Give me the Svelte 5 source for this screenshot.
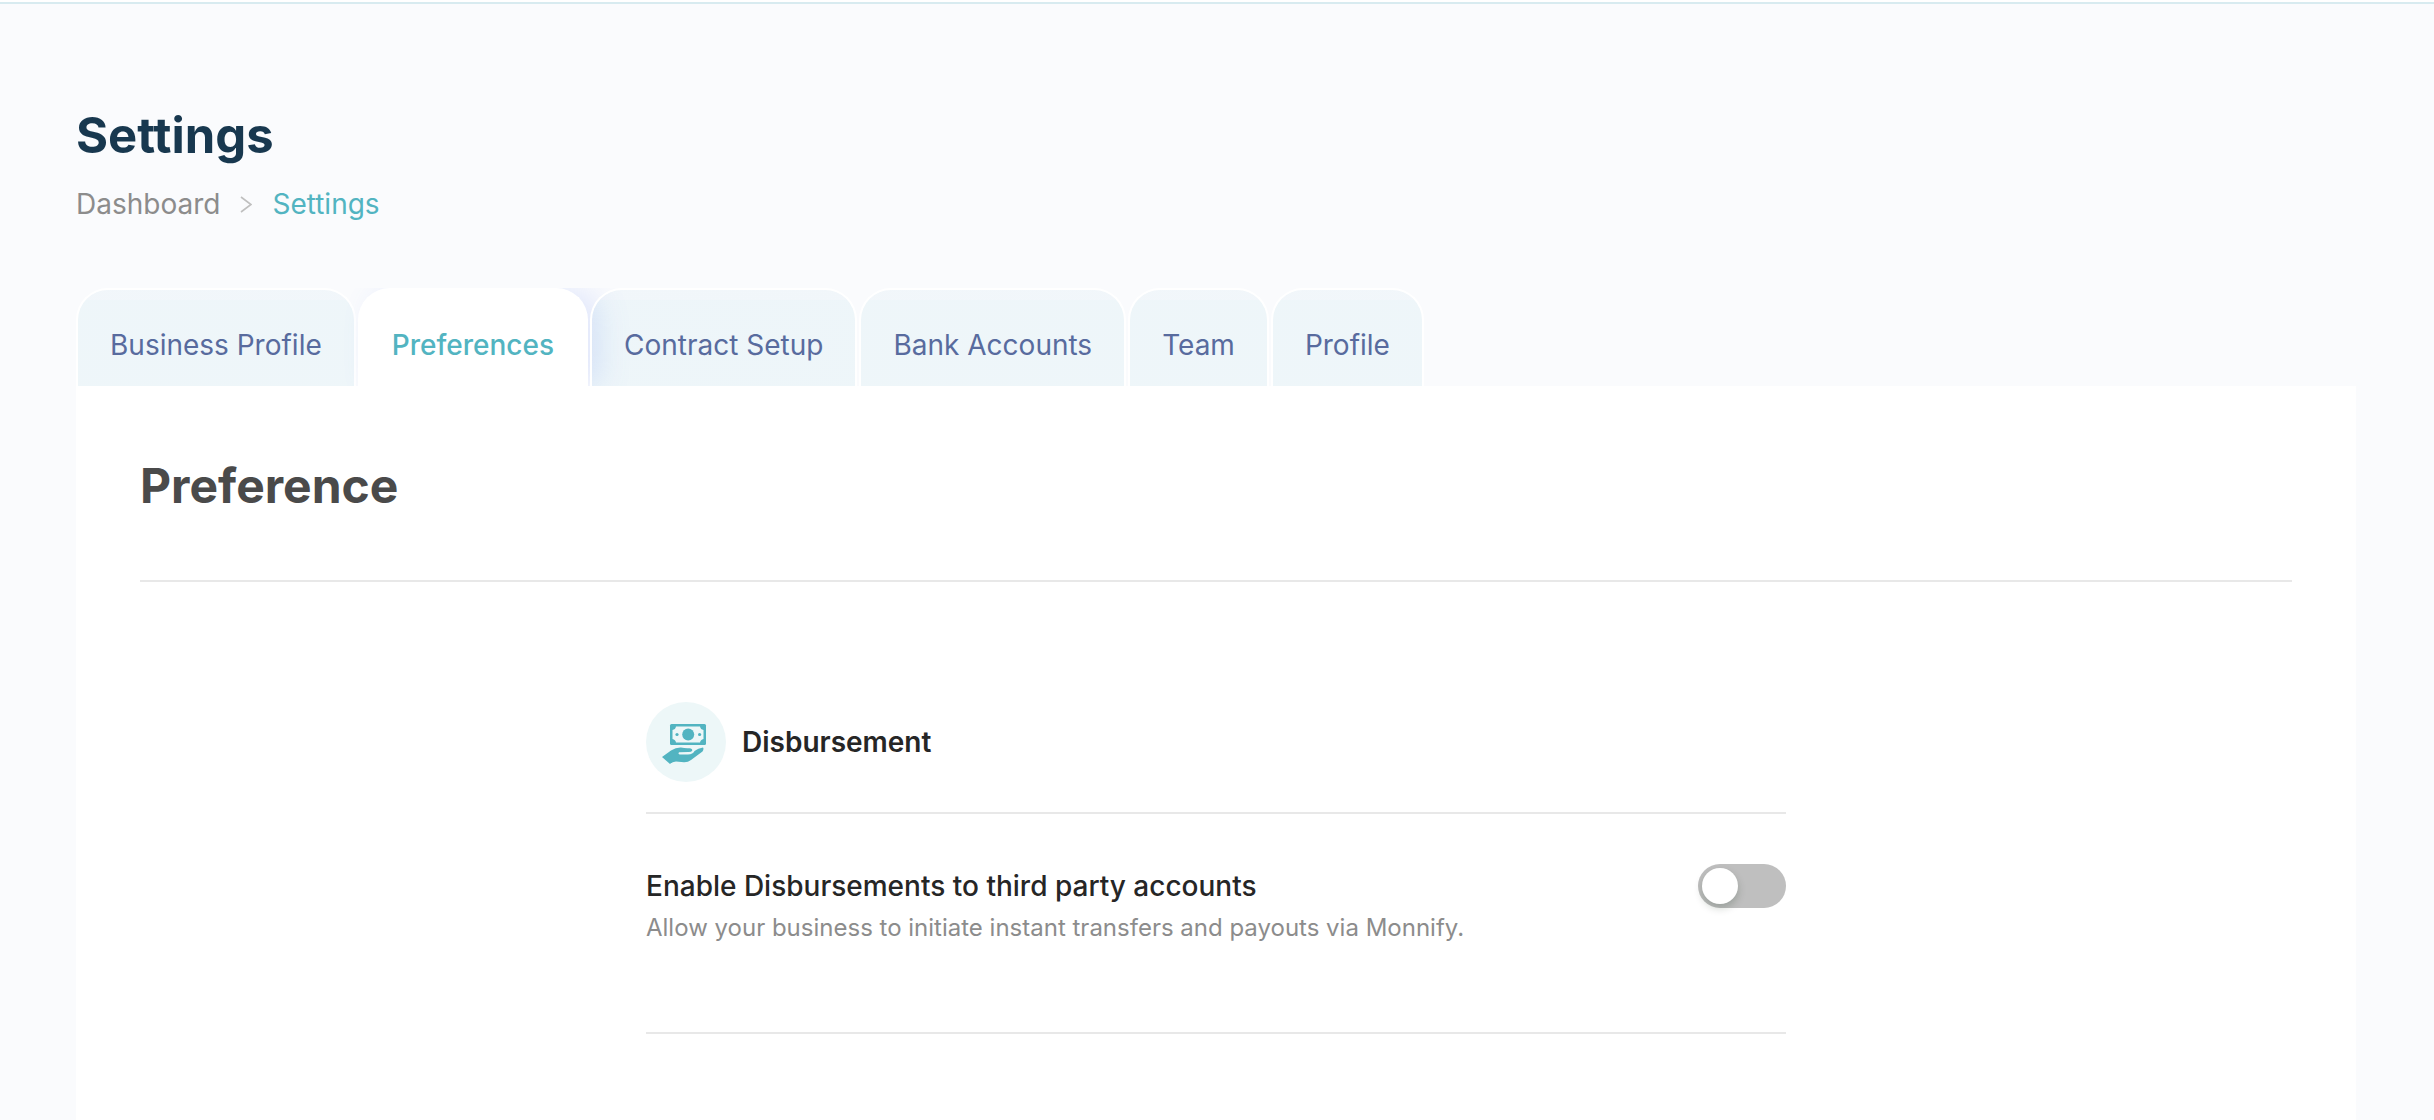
<script>
	let tabs = ['Business Profile', 'Preferences', 'Contract Setup', 'Bank Accounts', 'Team', 'Profile'];
	let active = 'Preferences';
	let disbursement = false;
</script>

<style>
	:global(body) {
		margin: 0;
		background: #fafbfd;
		font-family: Inter, 'Liberation Sans', sans-serif;
	}

	* {
		box-sizing: border-box;
	}

	h1, h2, h3, p {
		margin: 0;
	}

	.page {
		display: flex;
		flex-direction: column;
		min-height: 100vh;
	}

	.topbar {
		height: 4px;
		background: #ffffff;
		border-bottom: 2px solid #d8ebf0;
	}

	.content {
		flex: 1;
		display: flex;
		flex-direction: column;
		padding: 100px 78px 0 76px;
	}

	h1 {
		font-size: 49px;
		line-height: 64px;
		font-weight: 700;
		color: #18384f;
	}

	.breadcrumb {
		display: flex;
		align-items: center;
		gap: 20px;
		margin-top: 16px;
		font-size: 28px;
		line-height: 40px;
		color: #8c8c8c;
	}

	.breadcrumb a {
		color: inherit;
		text-decoration: none;
	}

	.breadcrumb a.current {
		color: #52b4c1;
	}

	.breadcrumb svg {
		display: block;
		width: 12px;
		height: 18px;
	}

	.tabs {
		display: flex;
		gap: 2px;
		margin-top: 64px;
		overflow: hidden;
	}

	.tabs > button {
		position: relative;
		height: 98px;
		padding: 14px 32px 0;
		border: 2px solid #ffffff;
		border-bottom: none;
		border-radius: 32px 32px 0 0;
		background: linear-gradient(rgba(82, 160, 200, 0.05) 10px, rgba(82, 180, 200, 0.07) 10px);
		color: #586b9e;
		font-family: inherit;
		font-size: 28px;
		line-height: 40px;
		cursor: pointer;
	}

	.tabs > button.active {
		background: #ffffff;
		color: #52b4c1;
		font-weight: 500;
		box-shadow: 14px 0 30px rgba(100, 130, 240, 0.16);
	}

	.panel {
		flex: 1;
		padding: 68px 64px 0;
		background: #ffffff;
	}

	h2 {
		padding-bottom: 62px;
		border-bottom: 2px solid #e8e8e8;
		font-size: 48px;
		line-height: 64px;
		font-weight: 700;
		color: #4a4a4a;
	}

	.section {
		max-width: 1140px;
		margin: 120px auto 0;
	}

	.section-title {
		display: flex;
		align-items: center;
		gap: 16px;
		padding-bottom: 30px;
		border-bottom: 2px solid #e8e8e8;
	}

	.section-title svg {
		display: block;
		width: 80px;
		height: 80px;
	}

	h3 {
		font-size: 28px;
		line-height: 40px;
		font-weight: 600;
		color: #262626;
	}

	.setting {
		display: flex;
		justify-content: space-between;
		align-items: flex-start;
		padding: 50px 0 84px;
		border-bottom: 2px solid #e8e8e8;
	}

	.setting label {
		display: block;
		font-size: 28px;
		line-height: 44px;
		font-weight: 500;
		color: #262626;
	}

	.setting p {
		font-size: 24px;
		line-height: 40px;
		color: #8c8c8c;
	}

	.switch {
		appearance: none;
		display: flex;
		flex: none;
		width: 88px;
		height: 44px;
		margin: 0;
		padding: 4px;
		border-radius: 22px;
		background: #bfbfbf;
		cursor: pointer;
	}

	.switch::before {
		content: '';
		width: 36px;
		height: 36px;
		border-radius: 50%;
		background: #ffffff;
		box-shadow: 0 4px 8px rgba(0, 35, 11, 0.2);
	}

	.switch:checked {
		justify-content: flex-end;
		background: #52b4c1;
	}
</style>

<div class="page">
	<header class="topbar"></header>

	<main class="content">
		<h1>Settings</h1>
		<nav class="breadcrumb">
			<a href="#dashboard">Dashboard</a>
			<svg viewBox="0 0 12 18" fill="none" stroke="#bfbfbf" stroke-width="1.6" aria-hidden="true">
				<path d="M1 2 L11 9.500 L1 17" />
			</svg>
			<a class="current" href="#settings">Settings</a>
		</nav>

		<div class="tabs">
			{#each tabs as tab}
				<button class:active={active === tab} on:click={() => active = tab}>{tab}</button>
			{/each}
		</div>

		<div class="panel">
			<h2>Preference</h2>

			<div class="section">
				<div class="section-title">
					<svg viewBox="0 0 80 80" aria-hidden="true">
						<circle cx="40" cy="40" r="40" fill="#edf7f8" />
						<rect x="24" y="22" width="36" height="21" rx="1.500" fill="#52b4c1" />
						<path d="M30 24.500 H54 Q54.500 27.500 57.500 28 V37 Q54.500 37.500 54 40.500 H30 Q29.500 37.500 26.500 37 V28 Q29.500 27.500 30 24.500 Z" fill="#edf7f8" />
						<circle cx="42.200" cy="32.500" r="6" fill="#52b4c1" />
						<circle cx="31" cy="32.500" r="1.600" fill="#52b4c1" />
						<circle cx="53.600" cy="32.500" r="1.600" fill="#52b4c1" />
						<path d="M16 55 L25 48.500 Q30 45.300 35 45.500 Q39 46.500 43.500 46.200 Q46.500 46.700 46.300 48.500 Q45.500 50.200 42 50 L33 50.200 Q31.500 51.500 33.500 52.500 H42 Q47 52.300 48.500 49 Q52 46 57 45.500 Q58.200 46.500 56.500 49.500 L45 58 Q42 60.300 38 60.200 L30 59.500 Q26.500 59.500 24 62 Z" fill="#52b4c1" />
					</svg>
					<h3>Disbursement</h3>
				</div>

				<div class="setting">
					<div>
						<label for="disbursement">Enable Disbursements to third party accounts</label>
						<p>Allow your business to initiate instant transfers and payouts via Monnify.</p>
					</div>
					<input id="disbursement" class="switch" type="checkbox" role="switch" bind:checked={disbursement} />
				</div>
			</div>
		</div>
	</main>
</div>
